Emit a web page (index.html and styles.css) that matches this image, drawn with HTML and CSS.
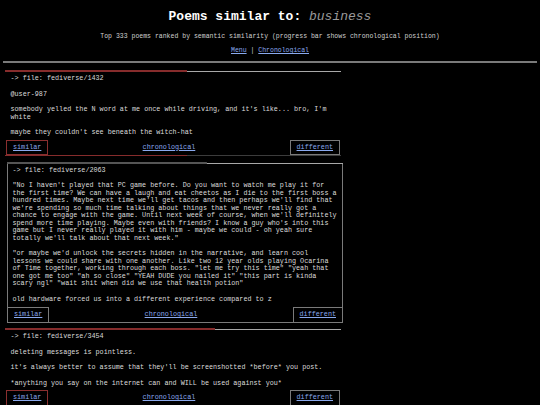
FILE: index.html
```html
<!DOCTYPE html>
<html lang="en">
<head>
<meta charset="utf-8">
<title>Poems similar to: business</title>
<link rel="stylesheet" href="styles.css">
</head>
<body>
<header class="top">
  <h1 class="title">Poems similar to: <em class="query">business</em></h1>
  <p class="sub">Top 333 poems ranked by semantic similarity (progress bar shows chronological position)</p>
  <p class="nav"><a href="#">Menu</a> | <a href="#">Chronological</a></p>
</header>
<hr class="rule">
<main class="list">
  <article class="card">
    <div class="bar" style="--p:54.2%"></div>
    <div class="box">
      <div class="file">-&gt; file: fediverse/1432</div>
      <p>@user-987</p>
      <p>somebody yelled the N word at me once while driving, and it's like... bro, I'm white</p>
      <p>maybe they couldn't see beneath the witch-hat</p>
      <nav class="actions">
        <a class="btn hot" href="#">similar</a>
        <a class="mid" href="#">chronological</a>
        <a class="btn" href="#">different</a>
      </nav>
    </div>
    <div class="bar under" style="--p:54.2%"></div>
  </article>

  <article class="card seen">
    <div class="bar" style="--p:59.5%"></div>
    <div class="box">
      <div class="file">-&gt; file: fediverse/2063</div>
      <p>"No I haven't played that PC game before. Do you want to watch me play it for the first time? We can have a laugh and eat cheetos as I die to the first boss a hundred times. Maybe next time we'll get tacos and then perhaps we'll find that we're spending so much time talking about things that we never really got a chance to engage with the game. Until next week of course, when we'll definitely spend more time playing. Maybe even with friends? I know a guy who's into this game but I never really played it with him - maybe we could - oh yeah sure totally we'll talk about that next week."</p>
      <p>"or maybe we'd unlock the secrets hidden in the narrative, and learn cool lessons we could share with one another. Like two 12 year olds playing Ocarina of Time together, working through each boss. "let me try this time" "yeah that one got me too" "ah so close" "YEAH DUDE you nailed it" "this part is kinda scary ngl" "wait shit when did we use that health potion"</p>
      <p>old hardware forced us into a different experience compared to z</p>
      <nav class="actions">
        <a class="btn" href="#">similar</a>
        <a class="mid" href="#">chronological</a>
        <a class="btn" href="#">different</a>
      </nav>
    </div>
  </article>

  <article class="card">
    <div class="bar" style="--p:62.5%"></div>
    <div class="box">
      <div class="file">-&gt; file: fediverse/3454</div>
      <p>deleting messages is pointless.</p>
      <p>it's always better to assume that they'll be screenshotted *before* you post.</p>
      <p>*anything you say on the internet can and WILL be used against you*</p>
      <nav class="actions">
        <a class="btn hot" href="#">similar</a>
        <a class="mid" href="#">chronological</a>
        <a class="btn" href="#">different</a>
      </nav>
    </div>
    <div class="bar under" style="--p:62.5%"></div>
  </article>
</main>
</body>
</html>
```
FILE: styles.css
```css
html, body {
  background: #000;
}
body {
  margin: 0;
  padding: 0 3px;
  color: #dcdcdc;
  font-family: "Liberation Mono", "DejaVu Sans Mono", monospace;
  font-size: 6.75px;
  line-height: normal;
}
a {
  color: #8aa9ee;
  text-decoration: underline;
}
.top {
  text-align: center;
}
.title {
  margin: 0;
  padding-top: 8.6px;
  font-size: 13px;
  font-weight: bold;
  color: #fff;
  line-height: normal;
}
.query {
  font-weight: normal;
  font-style: italic;
  color: #9a9a9a;
}
.sub {
  margin: 9.7px 0 0;
  font-size: 6.5px;
  color: #d0d0d0;
}
.nav {
  margin: 6.9px 0 0;
  font-size: 6.5px;
  color: #cfcfcf;
}
.rule {
  margin: 7.3px 0 0;
  border: 0;
  height: 2px;
  background: #7a7a7a;
}
.list {
  width: 336px;
  margin: 6.4px 0 0 2px;
  display: flex;
  flex-direction: column;
  gap: 5.7px;
}
.card {
  --fill: #862c2c;
  display: flex;
  flex-direction: column;
}
.card.seen {
  --fill: #555;
  margin-left: 2px;
  margin-right: -2px;
}
.bar {
  height: 2px;
  background:
    linear-gradient(var(--fill), var(--fill)) 0 0 / var(--p) 100% no-repeat,
    linear-gradient(#a8a8a8, #a8a8a8) 0 100% / 100% 1px no-repeat;
}
.bar.under {
  height: 1px;
  background:
    linear-gradient(var(--fill), var(--fill)) 0 0 / var(--p) 100% no-repeat,
    linear-gradient(#3c3c3c, #3c3c3c) 0 0 / 100% 100% no-repeat;
}
.box {
  border: 1px solid transparent;
  border-top: 0;
  border-bottom: 0;
  padding: 3.2px 4.5px 0;
  line-height: 7.5px;
}
.seen .box {
  border-color: #7a7a7a;
  border-bottom: 1px solid #7a7a7a;
}
.file {
  color: #d8d8d8;
}
.box p {
  margin: 8px 0 0;
}
.actions {
  margin: 3px -4.5px 0;
  display: flex;
  justify-content: space-between;
  align-items: center;
}
.seen .actions {
  margin: 3.6px -5.5px -1px;
}
.btn {
  border: 1px solid #7a7a7a;
  padding: 3px 6px;
}
.btn.hot {
  border-color: #8a2f2f;
}
```
